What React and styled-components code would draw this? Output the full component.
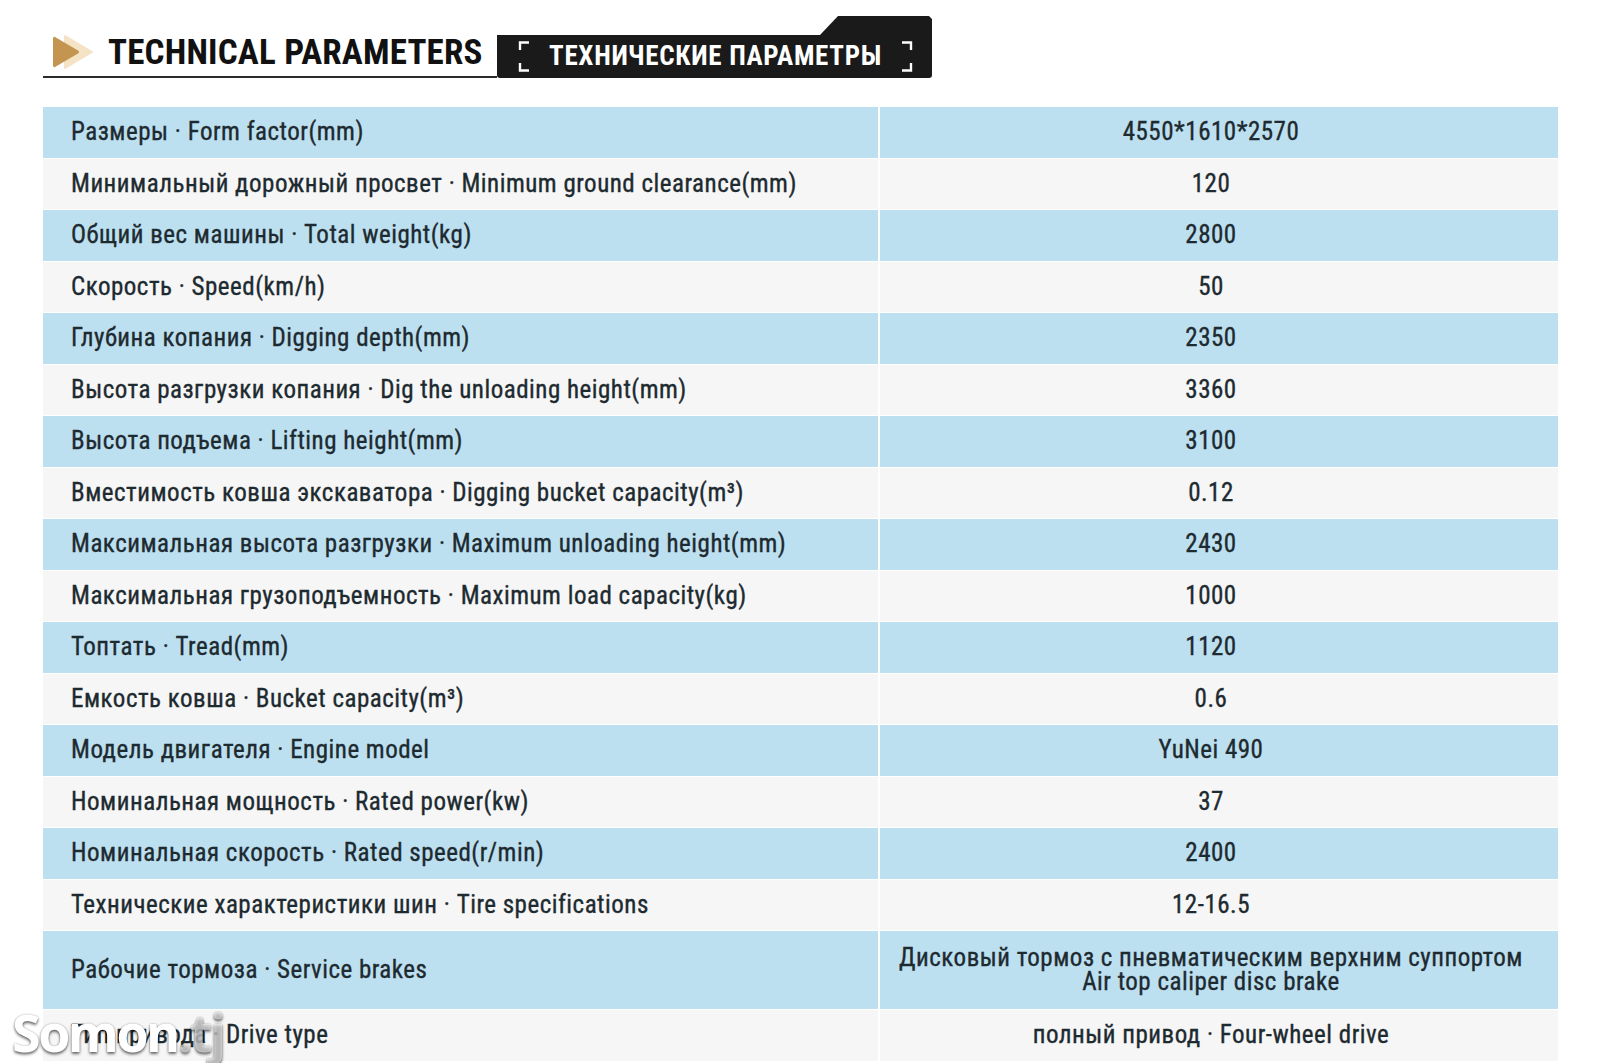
import React from "react";
import styled, { createGlobalStyle } from "styled-components";

const Global = createGlobalStyle`
  html, body { margin: 0; padding: 0; background: #ffffff; }
  body { width: 1600px; height: 1063px; overflow: hidden; }
  * { box-sizing: border-box; }
`;

const FONT = `"Roboto Condensed", "DejaVu Sans Condensed", "Liberation Sans Narrow", "Roboto", sans-serif`;

const Page = styled.div`
  position: relative;
  width: 1600px;
  height: 1063px;
  background: #ffffff;
  font-family: ${FONT};
  padding: 16px 0 0 43px;
`;

const Header = styled.div`
  display: flex;
  align-items: flex-end;
  height: 62px;
`;

const TitleBlock = styled.div`
  display: flex;
  align-items: center;
  width: 454px;
  height: 46px;
  border-bottom: 2px solid #2b2b2b;
  padding: 0 0 4px 9px;
  gap: 14px;
`;

const Title = styled.div`
  font-size: 35px;
  font-weight: 700;
  color: #111111;
  letter-spacing: 0.2px;
  line-height: 1;
`;

const Tab = styled.div`
  width: 435px;
  height: 62px;
  background: #1a1a1a;
  clip-path: polygon(0 19px, 323px 19px, 341px 0, 432px 0, 435px 3px, 435px 62px, 0 62px);
  border-radius: 3px;
  display: flex;
  align-items: flex-end;
`;

const TabInner = styled.div`
  width: 100%;
  height: 43px;
  display: flex;
  align-items: center;
  padding: 0 19px 0 21px;
  gap: 14px;
`;

const TabText = styled.div`
  flex: 1;
  font-size: 27px;
  font-weight: 700;
  color: #ffffff;
  letter-spacing: 0.7px;
  line-height: 1;
  text-align: center;
`;

const Table = styled.div`
  margin-top: 29px;
  width: 1515px;
  display: flex;
  flex-direction: column;
`;

const Row = styled.div`
  display: grid;
  grid-template-columns: 835px 1fr;
  column-gap: 2px;
  height: ${(p) => p.$h}px;
  border-bottom: 1px solid #ffffff;
`;

const Cell = styled.div`
  background: ${(p) => (p.$blue ? "#bde0f0" : "#f6f6f6")};
  display: flex;
  align-items: center;
  color: #1d2a30;
  font-size: 25px;
  font-weight: 400;
  letter-spacing: 0.5px;
  line-height: 24px;
  -webkit-text-stroke: 0.35px #1d2a30;
`;

const LabelCell = styled(Cell)`
  padding-left: 28px;
`;

const ValueCell = styled(Cell)`
  justify-content: center;
  text-align: center;
  padding-right: 16px;
  white-space: pre-line;
`;

const Watermark = styled.div`
  position: absolute;
  left: 12px;
  top: 996px;
  font-family: "Open Sans", "Liberation Sans", sans-serif;
  font-size: 52px;
  font-weight: 700;
  color: #ffffff;
  letter-spacing: -2.5px;
  text-shadow: 0 2px 3px rgba(0, 0, 0, 0.55), 0 0 2px rgba(0, 0, 0, 0.3);
  pointer-events: none;
`;

const Faded = styled.span`
  color: rgba(255, 255, 255, 0.6);
`;

const PlayIcon = () => (
  <svg width="42" height="36" viewBox="0 0 42 36">
    <path d="M13 2 L40 18 L13 34 Z" fill="#f4e3c4" strokeLinejoin="round" stroke="#f4e3c4" strokeWidth="2" />
    <path d="M3 3 Q1 2 1 5 L1 31 Q1 34 3 33 L26 19.5 Q28 18 26 16.5 Z" fill="#c39550" />
  </svg>
);

const Bracket = ({ right }) => (
  <svg width="13" height="31" viewBox="0 0 13 31" style={right ? { transform: "scaleX(-1)" } : undefined}>
    <path d="M11 1.5 H2 V9" fill="none" stroke="#ffffff" strokeWidth="2.4" />
    <path d="M11 29.5 H2 V22" fill="none" stroke="#ffffff" strokeWidth="2.4" />
  </svg>
);

const rows = [
  ["Размеры · Form factor(mm)", "4550*1610*2570"],
  ["Минимальный дорожный просвет · Minimum ground clearance(mm)", "120"],
  ["Общий вес машины · Total weight(kg)", "2800"],
  ["Скорость · Speed(km/h)", "50"],
  ["Глубина копания · Digging depth(mm)", "2350"],
  ["Высота разгрузки копания · Dig the unloading height(mm)", "3360"],
  ["Высота подъема · Lifting height(mm)", "3100"],
  ["Вместимость ковша экскаватора · Digging bucket capacity(m³)", "0.12"],
  ["Максимальная высота разгрузки · Maximum unloading height(mm)", "2430"],
  ["Максимальная грузоподъемность · Maximum load capacity(kg)", "1000"],
  ["Топтать · Tread(mm)", "1120"],
  ["Емкость ковша · Bucket capacity(m³)", "0.6"],
  ["Модель двигателя · Engine model", "YuNei 490"],
  ["Номинальная мощность · Rated power(kw)", "37"],
  ["Номинальная скорость · Rated speed(r/min)", "2400"],
  ["Технические характеристики шин · Tire specifications", "12-16.5"],
  [
    "Рабочие тормоза · Service brakes",
    "Дисковый тормоз с пневматическим верхним суппортом\nAir top caliper disc brake",
    79,
  ],
  ["Тип привода · Drive type", "полный привод · Four-wheel drive"],
];

export default function App() {
  return (
    <Page>
      <Global />
      <Header>
        <TitleBlock>
          <PlayIcon />
          <Title>TECHNICAL PARAMETERS</Title>
        </TitleBlock>
        <Tab>
          <TabInner>
            <Bracket />
            <TabText>ТЕХНИЧЕСКИЕ ПАРАМЕТРЫ</TabText>
            <Bracket right />
          </TabInner>
        </Tab>
      </Header>
      <Table>
        {rows.map(([label, value, h], i) => (
          <Row key={i} $h={h || 51.5}>
            <LabelCell $blue={i % 2 === 0}>{label}</LabelCell>
            <ValueCell $blue={i % 2 === 0}>{value}</ValueCell>
          </Row>
        ))}
      </Table>
      <Watermark>
        Somon<Faded>.tj</Faded>
      </Watermark>
    </Page>
  );
}
